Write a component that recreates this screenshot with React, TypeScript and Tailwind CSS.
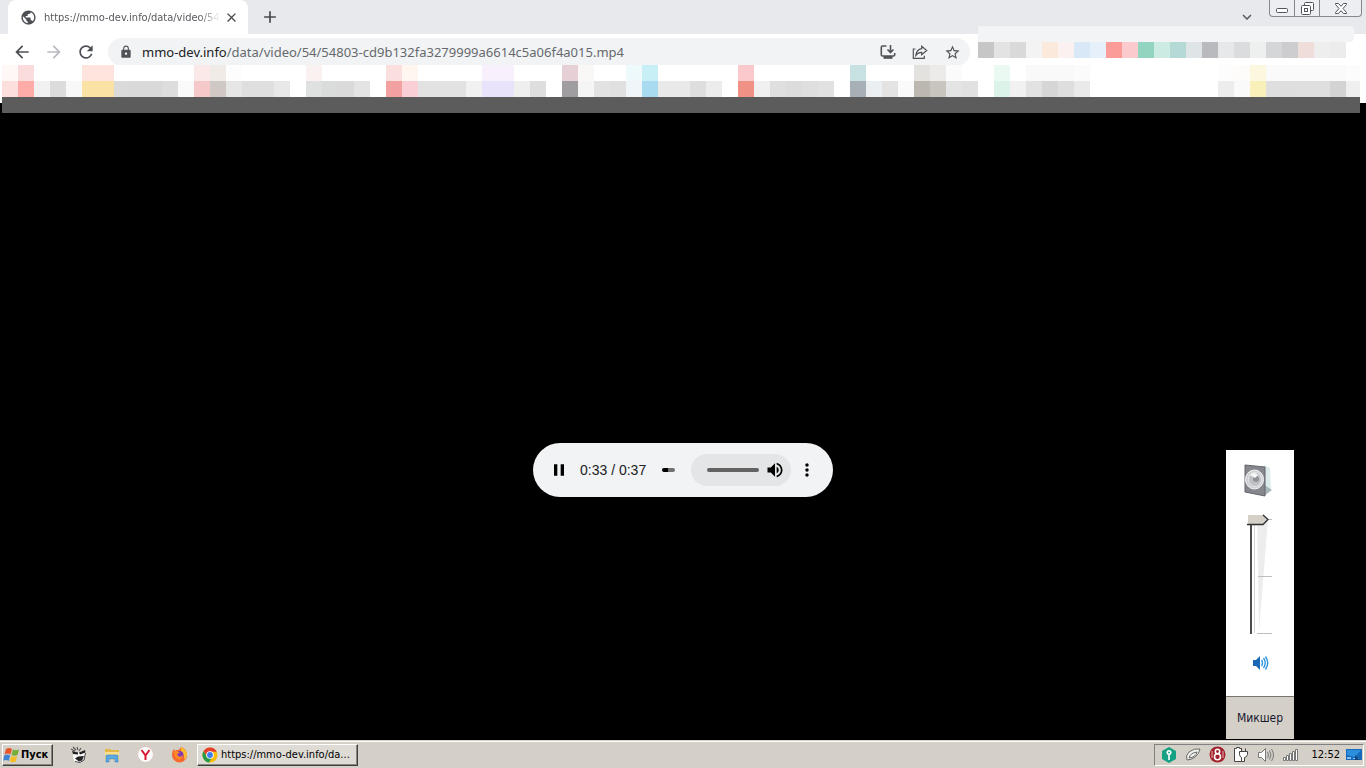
import React from "react";
import {
  MdArrowBack,
  MdArrowForward,
  MdRefresh,
  MdLock,
  MdStarBorder,
  MdClose,
  MdAdd,
  MdPause,
  MdVolumeUp,
  MdMoreVert,
  MdPublic,
  MdExpandMore,
} from "react-icons/md";

const W = "#ffffff";

const bookmarksTop = [
  "#fff8f6", "#fbdcdc", W, W, W, "#fee4dc", "#fee4dc", W, W, W, W, W, "#fbe9e9", "#f0ebe7", "#fdfdfd", W, W,
  W, W, "#faf2f0", W, W, W, W, "#fbdede", "#fff6f0", W, W, W, W, "#f8f0fc", "#f8f0fc", W, W, W, "#e6d0d6",
  "#faf8f6", W, W, "#edf9fa", "#c8eef6", W, W, W, W, W, "#fbc8cc", W, W, W, W, W, W, "#c8e2e4", W, W, W,
  "#e4e2de", "#ecebe9", "#fbfbfb", W, W, "#eaf9f2", W, "#f9f9f9", "#f9f9f9", "#f9f9f9", "#fbfbfb", W, W, W,
  W, W, W, W, W, "#fdfdfd", "#fdfcfa", "#fcf8e0", "#fafafa", "#fafafa", "#fafafa", "#fafafa", "#fafafa", "#fcfcfc",
];

const bookmarksBottom = [
  "#fde0de", "#ffaca8", "#f1f1f1", "#dcdcdc", "#f8f8f8", "#fae2a4", "#fae2a4", "#dadada", "#d9d9d9", "#d9d9d9",
  "#dddddd", "#fafafa", "#f5c8ca", "#cfc8c4", "#e6e6e6", "#dfdfdf", "#dfdfdf", "#e8e8e8", W, "#dfe1e1",
  "#dadcdc", "#dadada", "#e4e4e4", W, "#f3a0a0", "#fad0d6", "#e2e2e2", "#e2e2e2", "#e2e2e2", "#f1f1f1",
  "#e9e2fb", "#e9e2fb", "#efefef", "#dedede", W, "#a09da0", "#f5f5f5", "#e2e2e2", "#e0e0e0", "#eff5f8",
  "#a8dbf0", "#e9e9e9", "#e9e9e9", "#dedede", "#ececec", W, "#ef9285", "#f0f0f0", "#dfdfdf", "#dcdcdc",
  "#dfdfdf", "#e1e1e1", W, "#a7b0b6", "#eceff1", "#e3e3e3", "#fafafa", "#bcb8b0", "#c8c5be", "#e4e4e4",
  "#e1e1e1", W, "#dcf3e9", "#f1f1f1", "#e2e2e2", "#d6d6d6", "#dedede", "#eaeaea", W, W, W, W, W, W, W, W,
  "#ededed", "#fafafa", "#f8f0b8", "#dfdfdf", "#dedede", "#dfdfdf", "#dfdfdf", "#d3d3d3", "#efefef",
];

const extensions = [
  "#c6c6c6", "#e3e3e3", "#d9d9d9", "#f3f3f3", "#fbeadb", "#faf1f0", "#d9e8f6", "#e6f0fb", "#fb9c98", "#fbcacd",
  "#93d4c1", "#ccebe2", "#b5d9d5", "#dfe4e7", "#b9babd", "#e6e8ea", "#dadcde", "#eef0ef", "#d5d6d8", "#cdcdcf",
  "#eeddd8", "#eeeeee", "#ececec",
];

function Mosaic({ cells }: { cells: string[] }) {
  return (
    <div className="flex h-4 overflow-hidden">
      {cells.map((c, i) => (
        <span key={i} className="h-4 w-4 shrink-0" style={{ backgroundColor: c }} />
      ))}
    </div>
  );
}

function TabStrip() {
  return (
    <header className="flex h-[34px] items-start bg-[#e7e9ed]">
      <div className="ml-2 flex h-[34px] w-[240px] items-center rounded-t-lg bg-white pr-2 pl-3">
        <MdPublic className="h-[17px] w-[17px] shrink-0 text-[#4b4f54]" />
        <span className="ml-[7px] w-[176px] pt-[2px] font-['DejaVu_Sans_Condensed','DejaVu_Sans',sans-serif] text-[11px] whitespace-nowrap text-[#56595d] [mask-image:linear-gradient(to_right,black_88%,transparent)]">
          https://mmo-dev.info/data/video/54
        </span>
        <button aria-label="Close tab" className="ml-1 text-[#45484c]">
          <MdClose className="h-[15px] w-[15px]" />
        </button>
      </div>
      <button aria-label="New tab" className="ml-3 flex h-[34px] items-center text-[#45484c]">
        <MdAdd className="h-5 w-5" />
      </button>
      <button aria-label="Search tabs" className="mr-[13px] ml-auto flex h-[34px] items-center text-[#55585c]">
        <MdExpandMore className="h-[18px] w-[18px]" />
      </button>
      <div className="mr-1 flex h-[17px] w-[93px] rounded-b-[4px] border border-t-0 border-[#85888d] bg-[#eceef1]">
        <button aria-label="Minimize" className="flex w-[25px] justify-center border-r border-[#85888d] pt-2">
          <svg width="13" height="5" viewBox="0 0 13 5">
            <rect x=".5" y=".5" width="11" height="4" rx="1" fill="#fff" stroke="#50545f" />
          </svg>
        </button>
        <button aria-label="Restore" className="flex w-[25px] justify-center border-r border-[#85888d] pt-[2px]">
          <svg width="13" height="13" viewBox="0 0 13 13" fill="#fff" stroke="#50545f">
            <rect x="3.5" y=".5" width="9" height="8" rx="1" />
            <rect x=".5" y="3.5" width="9" height="9" rx="1" />
            <rect x="3.5" y="6.5" width="3" height="3" />
          </svg>
        </button>
        <button aria-label="Close" className="flex flex-1 justify-center pt-[3px]">
          <svg width="12" height="11" viewBox="0 0 12 11">
            <path d="M.5.5h3L6 3.3 8.500.5h3v1L8 5.500l3.500 4v1h-3L6 7.700 3.500 10.500h-3v-1L4 5.500.5 1.500z" fill="#fff" stroke="#50545f" />
          </svg>
        </button>
      </div>
    </header>
  );
}

function Toolbar() {
  return (
    <div className="flex h-[31px] bg-white">
      <nav className="flex h-9 items-center gap-3 pr-[12px] pl-3 text-[#4b4f54]">
        <button aria-label="Back"><MdArrowBack className="h-5 w-5" /></button>
        <button aria-label="Forward" className="text-[#b9bbbe]"><MdArrowForward className="h-5 w-5" /></button>
        <button aria-label="Reload"><MdRefresh className="h-5 w-5" /></button>
      </nav>
      <div className="mt-1 flex h-7 min-w-0 flex-1 items-center rounded-full bg-[#f1f3f4] pr-[9px] pl-[11px] text-[#505358]">
        <MdLock className="h-[14px] w-[14px] shrink-0" />
        <a
          href="#video"
          className="ml-[9px] flex-1 truncate font-['Noto_Sans',sans-serif] text-[13px] leading-5 text-[#666a6e]"
        >
          <span className="text-[#202124]">mmo-dev.info</span>/data/video/54/54803-cd9b132fa3279999a6614c5a06f4a015.mp4
        </a>
        <div className="flex items-center gap-4">
          <button aria-label="Install app">
            <svg width="16" height="16" viewBox="0 0 16 16" fill="none" stroke="currentColor" strokeWidth="1.6">
              <path d="M6.500 2H2.500Q1.300 2 1.300 3.200v7.600q0 1.200 1.200 1.200h11q1.200 0 1.200-1.200V9M10.500 1v7M7.500 5.500l3 3 3-3" />
              <path d="M3.500 12h9v2.800h-9z" fill="currentColor" stroke="none" />
            </svg>
          </button>
          <button aria-label="Share">
            <svg width="16" height="16" viewBox="0 0 16 16" fill="none" stroke="currentColor" strokeWidth="1.200">
              <path d="M3.500 5H1.300v9.300h11v-2.500M9.700 2.200l5 4.300-5 4.300V8.400Q6 8.300 3.800 11.300 4.500 5.500 9.700 4.700z" />
            </svg>
          </button>
          <button aria-label="Bookmark"><MdStarBorder className="h-[17px] w-[17px]" /></button>
        </div>
      </div>
      <div className="relative -mt-2 ml-2 w-[388px] shrink-0">
        <div className="mr-3 h-4 rounded-r-sm bg-[#f3f4f6]" />
        <Mosaic cells={extensions} />
      </div>
    </div>
  );
}

function Player() {
  return (
    <section aria-label="Media player" className="flex h-[54px] w-[300px] items-center rounded-full bg-[#f1f3f4] pl-4 text-black">
      <button aria-label="Pause"><MdPause className="h-5 w-5" /></button>
      <span className="ml-[11px] w-[68px] font-['Liberation_Sans',Arial,sans-serif] text-[14px] whitespace-nowrap text-[#202124]">
        0:33 / 0:37
      </span>
      <input
        type="range"
        aria-label="Position"
        defaultValue={40}
        className="ml-[14px] h-1 w-[13px] appearance-none rounded-full bg-[linear-gradient(to_right,#000_45%,#707070_45%)] [&::-webkit-slider-thumb]:w-0 [&::-webkit-slider-thumb]:appearance-none"
      />
      <div className="ml-4 flex h-8 w-[100px] items-center rounded-full bg-[#e4e5e6] pl-4">
        <input
          type="range"
          aria-label="Volume"
          defaultValue={100}
          className="h-1 w-[52px] appearance-none rounded-full bg-[#626262] [&::-webkit-slider-thumb]:w-0 [&::-webkit-slider-thumb]:appearance-none"
        />
        <button aria-label="Mute" className="ml-[6px]"><MdVolumeUp className="h-5 w-5" /></button>
      </div>
      <button aria-label="More options" className="ml-[6px]"><MdMoreVert className="h-5 w-5" /></button>
    </section>
  );
}

function VolumePanel() {
  return (
    <aside aria-label="Volume" className="absolute right-[72px] bottom-px flex w-[68px] flex-col items-center bg-white">
      <svg className="mt-3" width="32" height="36" viewBox="2 0 32 36">
        <path d="M22 3l6 3 1 22-8 6z" fill="#dcebec" />
        <path d="M21 22l9 6-8 6z" fill="#a9b7ba" />
        <path d="M3 3l20 2v29L3 30z" fill="#85878d" stroke="#62656b" />
        <ellipse cx="12.500" cy="17.500" rx="9" ry="9.500" fill="#cfd1d4" stroke="#f3f4f5" />
        <ellipse cx="13" cy="17.500" rx="6.500" ry="7" fill="#bfc1c5" stroke="#e6e7e9" />
        <circle cx="14" cy="17" r="3" fill="#8e9299" />
        <path d="M8 13q4-4 8 0l-3 3z" fill="#f7f7f7" />
      </svg>
      <div className="relative mt-4 h-[122px] w-8">
        <svg width="32" height="122" viewBox="0 0 32 122">
          <path d="M13 5h11L15 118z" fill="#ededed" />
          <path d="M13 119.500h15M14 62.500h14M24 5.500h4" stroke="#bdbdbd" fill="none" />
          <path d="M7 8v112" stroke="#4b4b4b" strokeWidth="2" />
          <path d="M10.500 8v111" stroke="#d5d5d5" />
          <path d="M4 1h15l5 4.500-5 5H4z" fill="#d4d0c8" />
          <path d="M3 10.500h16l5-5L19 1" stroke="#303030" strokeWidth="1.300" fill="none" />
        </svg>
        <input type="range" aria-label="System volume" defaultValue={100} className="absolute inset-0 h-full w-full opacity-0" />
      </div>
      <button aria-label="Mute system" className="mt-[18px]">
        <svg width="18" height="18" viewBox="0 0 18 18" fill="none">
          <path d="M2 6h3l4-4v14l-4-4H2z" fill="#1a68b4" />
          <path d="M10.500 6q2 3 0 6M12.500 4q3.500 5 0 10M14.500 2.500q4.500 6.500 0 13" stroke="#2f94dc" strokeWidth="1.400" />
        </svg>
      </button>
      <button className="mt-6 h-[43px] w-full border-t border-[#77756f] bg-[#d4d0c8] font-['DejaVu_Sans_Condensed','DejaVu_Sans',sans-serif] text-[12px] text-[#1a1830]">
        Микшер
      </button>
    </aside>
  );
}

function ChromeLogo() {
  return (
    <svg width="16" height="16" viewBox="0 0 16 16" className="shrink-0">
      <circle cx="8" cy="8" r="7.500" fill="#fbbc05" />
      <path d="M1.500 4.200A7.500 7.500 0 0 1 14.800 4.700H8L5 9.500z" fill="#e43e30" />
      <path d="M1.500 4.200 5 10l4.500 1.400L7 15.500A7.500 7.500 0 0 1 1.500 4.200z" fill="#279b48" />
      <circle cx="8" cy="8" r="3.800" fill="#fff" />
      <circle cx="8" cy="8" r="2.900" fill="#3f7de8" />
    </svg>
  );
}

const raised = "border border-t-white border-l-white border-r-[#404040] border-b-[#404040] shadow-[inset_-1px_-1px_0_#87847d]";

function Taskbar() {
  return (
    <footer className="flex h-7 items-center border-t border-[#d4d0c8] bg-[#d4d0c8] font-['DejaVu_Sans_Condensed','DejaVu_Sans',sans-serif] text-black shadow-[inset_0_1px_0_#fff]">
      <button className={"ml-[2px] flex h-[22px] w-[51px] items-center gap-px text-[11px] font-bold " + raised}>
        <svg width="17" height="16" viewBox="0 0 17 16" className="shrink-0">
          <path d="M3 2q3-2 6 0L7.500 7.500q-3-2-6 0z" fill="#ea5529" />
          <path d="M10 2.500q3 1.500 6 0L14.500 8q-3 1.500-6 0z" fill="#75ad38" />
          <path d="M1.200 8.500q3-2 6 0L5.700 14q-3-2-5.500 0z" fill="#3f84d2" />
          <path d="M8.200 9q3 1.500 6 0l-1.500 5.500q-3 1.500-6 0z" fill="#f6bd27" />
        </svg>
        <span className="pt-[2px]">Пуск</span>
      </button>
      <div className="ml-[17px] flex items-center gap-[17px]">
        <button aria-label="Media player">
          <svg width="17" height="17" viewBox="0 0 17 17">
            <path d="M3 6l5 1 6-3 2 3-2 7-4 3-5-1-2-4z" fill="#f8f8f8" />
            <path d="M1 3l4 2M3 1l3 3M7 1l1 3M11 2l-2 3" stroke="#555" strokeWidth="1.100" />
            <path d="M2 5l6 1.500v2L3 8zM9 6.500L15 4l.5 2.500L10 8.500z" fill="#222" />
            <path d="M5 12.500l3-2 6-.5-2 4.500-3 1z" fill="#222" />
            <path d="M15.500 7l-1.500 7-4 2.500-5-1" stroke="#444" fill="none" />
          </svg>
        </button>
        <button aria-label="Explorer">
          <svg width="16" height="16" viewBox="0 0 16 16">
            <path d="M1 2h5l1 1h8v10H1z" fill="#e5b846" />
            <path d="M1 5h14v8H1z" fill="#f8df8d" />
            <path d="M2 15V9q0-1 1-1h10q1 0 1 1v6h-3v-3H5v3z" fill="#5ca9e2" stroke="#397fbd" strokeWidth=".6" />
          </svg>
        </button>
        <button aria-label="Yandex">
          <svg width="17" height="17" viewBox="0 0 17 17">
            <circle cx="8.500" cy="8.500" r="7.800" fill="#fff" stroke="#dfb9b9" strokeWidth=".6" />
            <path d="M4.500 4l4 5.500v4.500M12.500 4l-4 5.500" stroke="#d81930" strokeWidth="2" fill="none" />
          </svg>
        </button>
        <button aria-label="Firefox">
          <svg width="17" height="17" viewBox="0 0 17 17">
            <path d="M1 8q0-3 2-5l1 2q2-2 4-1L10 1q6 2 6 8a7.500 7.500 0 0 1-15 0z" fill="#f8672b" />
            <path d="M10 1q6 3 6 8-1 4-3 5 1-5-3-8z" fill="#fdbe30" />
            <circle cx="8.500" cy="9" r="4" fill="#853bb0" />
            <path d="M3 5q3-1 6 2-4 0-2 3 3 2 5-1 0 4-4 4.500Q3 13 3 5z" fill="#ff8a25" />
          </svg>
        </button>
      </div>
      <button className={"ml-[9px] flex h-[22px] w-[161px] items-center gap-[3px] bg-[#dedbd4] pl-1 text-[11px] whitespace-nowrap " + raised}>
        <ChromeLogo />
        <span className="pt-[2px]">https://mmo-dev.info/da...</span>
      </button>
      <div className="mr-[2px] ml-auto flex h-[22px] items-center border border-t-[#808080] border-r-white border-b-white border-l-[#808080] pr-px pl-[6px]">
        <div className="flex items-center gap-2">
          <svg width="16" height="16" viewBox="0 0 16 16">
            <path d="M8 0l7 4v8l-7 4-7-4V4z" fill="#16a084" />
            <path d="M7.200 7h1.600v6H7.200z" fill="#fff" />
            <circle cx="8" cy="5.500" r="2.500" fill="#fff" />
            <circle cx="8" cy="5.500" r=".9" fill="#16a084" />
          </svg>
          <svg width="16" height="16" viewBox="0 0 16 16" fill="#f2f2ef" stroke="#6a6a68">
            <path d="M2 13Q0 9 4 5q5-4 11-3-1 5-5 8-4 3-8 3z" />
            <path d="M4 11q1-5 8-6-1 5-8 6z" />
          </svg>
          <svg width="17" height="17" viewBox="0 0 17 17">
            <circle cx="8.500" cy="8.500" r="8" fill="#a1202b" />
            <circle cx="8.500" cy="5.500" r="2.200" fill="none" stroke="#fff" strokeWidth="1.600" />
            <circle cx="8.500" cy="10.800" r="3" fill="none" stroke="#fff" strokeWidth="1.600" />
            <path d="M3 5v7M14 5v7" stroke="#e8b6b6" />
          </svg>
          <svg width="16" height="17" viewBox="1 0 16 17" fill="#fff" stroke="#444">
            <path d="M1.500 2.500h2v-1h3v1h2v13h-7z" />
            <path d="M6.500 5.500h8v3q-1 3-3 3v4h-3v-4q-2-1-2-3zM8.500 5V2.500M12.500 5V2.500" />
          </svg>
          <svg width="17" height="16" viewBox="2 0 17 16" fill="none" stroke="#777">
            <path d="M2.500 5.500h3l4-4v13l-4-4h-3z" fill="#fff" />
            <path d="M11.500 5q2 3 0 6M13.500 3.500q3 4.500 0 9M15.500 2q4 6 0 12" />
          </svg>
          <svg width="16" height="16" viewBox="1 0 16 16" fill="#fff" stroke="#777">
            <path d="M1.500 10.500h2v3h-2zM4.500 8.500h2v5h-2zM7.500 6.500h2v7h-2zM10.500 4.500h2v9h-2zM13.500 2.500h2v11h-2z" />
          </svg>
        </div>
        <time className="ml-3 pt-[2px] text-[11px]">12:52</time>
        <button aria-label="Show desktop" className="ml-[6px]">
          <svg width="16" height="14" viewBox="0 0 16 14">
            <path d="M0 1h16v11H0z" fill="#1769b9" />
            <path d="M1 2h14L9 9 1 7z" fill="#2c8fdd" />
            <path d="M1 9h4v2H1zM7 10h6v1H7z" fill="#89bff0" />
            <path d="M9 7l5 5H9z" fill="#13467e" />
          </svg>
        </button>
      </div>
    </footer>
  );
}

export default function App() {
  return (
    <div className="flex min-h-screen flex-col bg-black">
      <TabStrip />
      <Toolbar />
      <div className="bg-white pr-[6px] pb-[6px] pl-[2px]">
        <Mosaic cells={bookmarksTop} />
        <Mosaic cells={bookmarksBottom} />
      </div>
      <main id="video" className="relative flex flex-1 flex-col items-center bg-black">
        <div className="relative -mt-[6px] h-4 w-full pr-[6px] pl-[2px]">
          <div className="h-4 bg-[#5c5c5c]" />
        </div>
        <div className="mt-[330px] mb-[243px]">
          <Player />
        </div>
        <VolumePanel />
      </main>
      <Taskbar />
    </div>
  );
}
